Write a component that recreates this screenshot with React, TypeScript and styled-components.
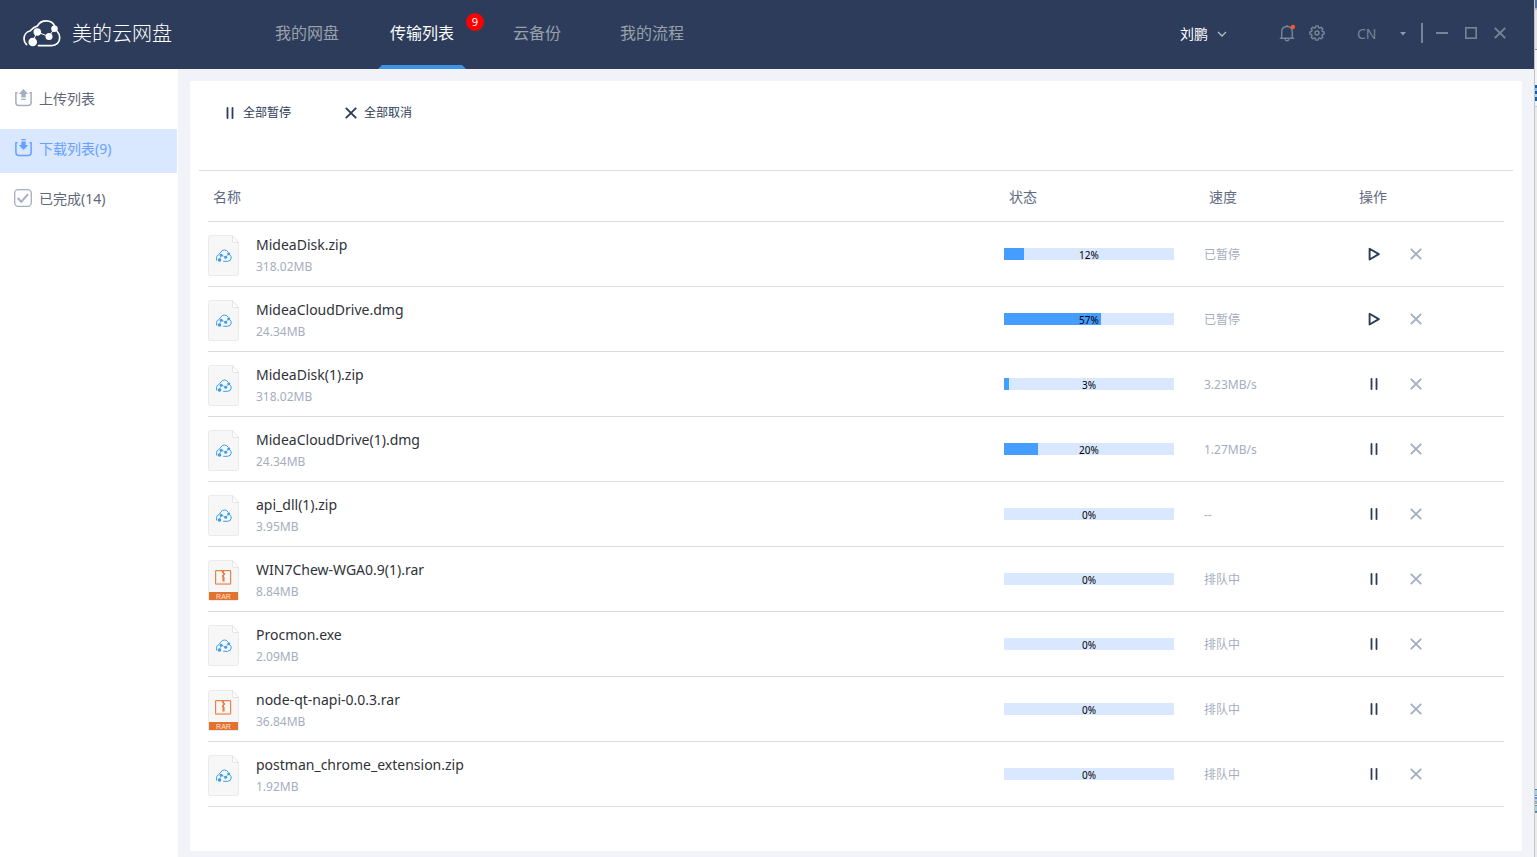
import React from "react";
import styled, { createGlobalStyle } from "styled-components";

const GlobalStyle = createGlobalStyle`
  * { box-sizing: border-box; }
  body {
    margin: 0;
    background: #f2f3f8;
    font-family: "Noto Sans", "Noto Sans CJK SC", sans-serif;
    font-size: 14px;
    line-height: 20px;
    color: #606a82;
  }
  button, select { font: inherit; color: inherit; }
  svg { display: block; flex: none; }
`;

const Screen = styled.div`
  display: flex;
  min-height: 100vh;
`;

const AppWindow = styled.div`
  flex: 1;
  min-width: 0;
  display: flex;
  flex-direction: column;
`;

const DesktopEdge = styled.div`
  width: 3px;
  flex: none;
  border-left: 1px solid #c4c5c8;
  background: linear-gradient(
    #56739b 0 8px, #b9b5b4 8px 10px, #e4e2e1 10px 49px, #8d8d8d 49px 50px, #f4f4f4 50px 85px,
    #0f5fae 85px 88px, #8dbbe6 88px 91px, #0f5fae 91px 94px, #b8d4ee 94px 97px, #0f5fae 97px 101px,
    #f4f4f4 101px 106px, #cccccc 106px 107px, #ebebeb 107px 789px,
    #2c8ab0 789px 790px, #a9d0de 790px 795px, #8a8a8a 795px 796px, #e8e8e8 796px 797px,
    #5b8fe0 797px 799px, #b6cdf2 799px 801px, #8fb3b3 801px 804px, #e8e8e8 804px 805px,
    #8a8a8a 805px 806px, #a9d0de 806px 811px, #2c8ab0 811px 812px, #8a8a8a 812px 813px, #ebebeb 813px
  );
`;

const Header = styled.header`
  display: flex;
  align-items: stretch;
  height: 69px;
  padding-left: 23px;
  background: #2c3c5a;
`;

const Brand = styled.div`
  display: flex;
  align-items: center;
  gap: 11px;
  width: 240px;
  flex: none;
  padding-bottom: 1px;
  color: #fff;
  font-size: 20px;
  font-weight: 300;
`;

const Nav = styled.nav`
  display: grid;
  grid-template-columns: 115px 123px 107px 88px;
  justify-items: start;
`;

const Tab = styled.a<{ $active?: boolean }>`
  position: relative;
  display: flex;
  align-items: center;
  padding: 0 12px 4px;
  font-size: 16px;
  text-decoration: none;
  white-space: nowrap;
  color: ${(p) => (p.$active ? "#fff" : "#98a0aa")};

  &::after {
    content: "";
    position: absolute;
    inset: auto 0 0;
    height: 4px;
    background: ${(p) => (p.$active ? "#3d93e4" : "transparent")};
    clip-path: polygon(4px 0, calc(100% - 4px) 0, 100% 100%, 0 100%);
  }
`;

const Badge = styled.span`
  position: absolute;
  left: 100%;
  top: 13px;
  width: 18px;
  height: 18px;
  border-radius: 9px;
  background: #fe0000;
  color: #fff;
  font-size: 11px;
  line-height: 18px;
  text-align: center;
`;

const HeaderTools = styled.div`
  display: flex;
  align-items: center;
  margin-left: auto;
  padding: 0 28px 3px 0;
  color: #77849a;
`;

const IconButton = styled.button`
  display: flex;
  align-items: center;
  justify-content: center;
  width: 20px;
  height: 20px;
  padding: 0;
  border: 0;
  background: none;
`;

const UserButton = styled.button`
  display: flex;
  align-items: center;
  gap: 9px;
  padding: 2px 0 0;
  margin-right: 50px;
  border: 0;
  background: none;
  color: #fff;
`;

const Notices = styled.div`
  display: flex;
  gap: 10px;
  margin-right: 30px;
`;

const LanguageField = styled.label`
  position: relative;
  display: flex;
  align-items: center;
  margin-right: 14px;
  padding-top: 2px;
  svg { position: absolute; right: 1px; pointer-events: none; }
`;

const LanguageSelect = styled.select`
  appearance: none;
  width: 50px;
  padding: 0;
  border: 0;
  background: none;
`;

const WindowControls = styled.div`
  display: flex;
  align-items: center;
  gap: 9px;
  padding-left: 9px;
  border-left: 2px solid #77849a;
  margin-right: -4px;
`;

const Body = styled.div`
  flex: 1;
  display: flex;
`;

const Sidebar = styled.aside`
  display: flex;
  flex-direction: column;
  gap: 6px;
  width: 178px;
  flex: none;
  padding: 10px 1px 0 0;
  background: #fff;
`;

const SideLink = styled.a<{ $active?: boolean }>`
  display: flex;
  align-items: flex-start;
  gap: 7px;
  height: 44px;
  padding: 10px 0 0 14px;
  text-decoration: none;
  color: ${(p) => (p.$active ? "#66a1ff" : "#606878")};
  background: ${(p) => (p.$active ? "#d9e7ff" : "transparent")};
  svg { color: ${(p) => (p.$active ? "#66a1ff" : "#a5adc0")}; }
`;

const Main = styled.main`
  flex: 1;
  min-width: 0;
  display: flex;
  padding: 12px 12px 6px;
`;

const Panel = styled.section`
  flex: 1;
  min-width: 0;
  padding: 0 9px;
  background: #fff;
`;

const Toolbar = styled.div`
  display: flex;
  align-items: flex-start;
  gap: 54px;
  height: 90px;
  padding: 21px 0 0 25px;
  border-bottom: 1px solid #dcdfe0;
`;

const ToolButton = styled.button`
  display: flex;
  align-items: center;
  gap: 7px;
  padding: 0;
  border: 0;
  background: none;
  color: #2c3c5a;
  font-size: 12px;
  line-height: 22px;
`;

const TableArea = styled.div`
  padding: 0 9px;
`;

const Table = styled.table`
  width: 100%;
  table-layout: fixed;
  border-collapse: separate;
  border-spacing: 0;
`;

const HeadCell = styled.th<{ $width?: number }>`
  width: ${(p) => (p.$width ? `${p.$width}px` : "auto")};
  height: 51px;
  padding: 2px 5px 0;
  border-bottom: 1px solid #dcdcdc;
  font-weight: 400;
  text-align: left;
`;

const Cell = styled.td`
  height: 65px;
  padding: 0;
  border-bottom: 1px solid #dcdcdc;
  color: #a5adc0;
  font-size: 12px;
`;

const FileCell = styled.div`
  display: flex;
  align-items: center;
  gap: 17px;
  padding-top: 2px;
`;

const FileText = styled.div`
  padding-top: 2px;
`;

const FileName = styled.div`
  color: #2f3238;
  font-size: 14px;
  line-height: 22px;
`;

const FileSize = styled.div`
  font-size: 12px;
  line-height: 22px;
`;

const Speed = styled.div`
  padding-top: 2px;
`;

const Track = styled.div`
  position: relative;
  width: 170px;
  height: 12px;
  background: #d9e7ff;
`;

const Fill = styled.div`
  height: 100%;
  background: #459dff;
`;

const Percent = styled.span`
  position: absolute;
  inset: 0;
  color: #000;
  font-size: 10px;
  line-height: 14px;
  text-align: center;
`;

const Actions = styled.div`
  display: flex;
  gap: 22px;
  padding-left: 10px;
`;

const Logo = () => (
  <svg width="38" height="28" viewBox="0 0 38 28" fill="none" stroke="#fff" aria-hidden="true">
    <path
      d="M3.500 24.500C1.800 23 1 21 1 18.800c0-4 2.600-7.100 6-7.800C9 8.700 12 6.600 14.500 5.900 16.300 2.700 19.500.9 23 .9c4.300 0 7.600 2.200 8.800 5.500M34.300 11.500c1.600 1.700 2.400 3.900 2.400 6.300 0 4.600-3.400 7.800-8 7.800H15.500"
      strokeWidth="1.700" strokeLinecap="round"
    />
    <path d="M9.500 22l4.700-10 11.500 4.500 6-8" strokeWidth="1" />
    <g fill="#fff" stroke="none">
      <circle cx="9.700" cy="22" r="4.300" />
      <circle cx="14.300" cy="12" r="3.800" />
      <circle cx="26" cy="16.500" r="3.500" />
      <circle cx="31.500" cy="8.700" r="3.300" />
    </g>
  </svg>
);

const PauseIcon = () => (
  <svg width="12" height="12" viewBox="0 0 12 12" stroke="#2c3c5a" strokeWidth="1.800" strokeLinecap="round" aria-hidden="true">
    <path d="M3.500 1v10M8.500 1v10" />
  </svg>
);

const PlayIcon = () => (
  <svg width="12" height="14" viewBox="0 0 12 14" fill="none" stroke="#2c3c5a" strokeWidth="1.900" strokeLinejoin="round" aria-hidden="true">
    <path d="M1.600 1.700v10.800L10.800 7.100z" />
  </svg>
);

const CrossIcon = ({ color }: { color: string }) => (
  <svg width="12" height="12" viewBox="0 0 12 12" stroke={color} strokeWidth="1.900" aria-hidden="true">
    <path d="M.8.8l10.400 10.400M11.200.8L.8 11.200" />
  </svg>
);

const TrayPath = () => (
  <path d="M3.500 3.800H1.900v9.700q0 3 3 3h9.200q3 0 3-3V3.800H15.500" fill="none" stroke="currentColor" strokeWidth="1.500" />
);

const UploadIcon = () => (
  <svg width="18" height="18" viewBox="0 0 18 18" aria-hidden="true">
    <TrayPath />
    <path d="M9.500 0l4.700 5h-2.500V8.500H7.300V5H4.800zM7.300 9.700h4.400v1.200H7.300z" fill="currentColor" />
  </svg>
);

const DownloadIcon = () => (
  <svg width="18" height="18" viewBox="0 0 18 18" aria-hidden="true">
    <TrayPath />
    <path d="M7.300 0h4.400v1.200H7.300zM7.300 2.400h4.400v3.600h2.500L9.500 11 4.800 6h2.500z" fill="currentColor" />
  </svg>
);

const DoneIcon = () => (
  <svg width="18" height="18" viewBox="0 0 18 18" fill="none" stroke="currentColor" aria-hidden="true">
    <rect x=".7" y=".7" width="16.600" height="16.600" rx="3.500" strokeWidth="1.300" />
    <path d="M3.600 9l3.700 3.800L14 5.200" strokeWidth="2" />
  </svg>
);

const BellIcon = () => (
  <svg width="18" height="18" viewBox="0 0 18 18" fill="none" stroke="currentColor" strokeWidth="1.400" aria-hidden="true">
    <path d="M1.800 14.300h14.400M3.700 14V8c0-3.300 2-5.500 5.300-5.500s5.300 2.200 5.300 5.500v6M9 2.500V1M7 15.300c.3 1 1 1.400 2 1.400s1.700-.4 2-1.400" />
    <circle cx="14.900" cy="3" r="2.200" fill="#ff5226" stroke="none" />
  </svg>
);

// Outline of an eight-toothed cog centred on (8, 8).
const cogPoints = Array.from({ length: 32 }, (_, i) => {
  const tooth = i % 4 < 2;
  const angle = ((Math.floor(i / 4) * 45 + [-9, 9, 16, 29][i % 4]) * Math.PI) / 180;
  const radius = tooth ? 7.2 : 5.6;
  return `${(8 + radius * Math.sin(angle)).toFixed(2)},${(8 - radius * Math.cos(angle)).toFixed(2)}`;
}).join(" ");

const GearIcon = () => (
  <svg width="16" height="16" viewBox="0 0 16 16" fill="none" stroke="currentColor" strokeWidth="1.400" strokeLinejoin="round" aria-hidden="true">
    <polygon points={cogPoints} />
    <circle cx="8" cy="8" r="2" />
  </svg>
);

const Sheet = () => (
  <>
    <path d="M2.500.5H24l6.500 7v31.500q0 1.500-1.500 1.500H2q-1.500 0-1.500-1.500V2.500q0-2 2-2z" fill="#f7f7f7" stroke="#ebebeb" />
    <path d="M24.500.5v5.500q0 1.500 1.500 1.500h4.500z" fill="#fff" stroke="#dedede" strokeWidth=".8" />
  </>
);

const CloudFileIcon = () => (
  <svg width="31" height="41" viewBox="0 0 31 41" aria-hidden="true">
    <Sheet />
    <g fill="none" stroke="#3a9ee8" strokeWidth="1">
      <path d="M8.600 25.500v-3.300q.2-2 2.200-2.500l2.200-2.800q1.200-1.900 3.500-1.900t3.500 2M22 20q1.300 1.200 1.200 3-.2 3-3.500 3.300h-4.500" />
      <path d="M11.500 25l1.500-5 4.500 2 3.500-3" strokeWidth=".6" />
    </g>
    <g fill="#3a9ee8">
      <circle cx="11.500" cy="25" r="1.800" />
      <circle cx="13.200" cy="20.300" r="1.500" />
      <circle cx="17.700" cy="22.300" r="1.500" />
      <circle cx="20.700" cy="18.700" r="1.500" />
    </g>
  </svg>
);

const RarFileIcon = () => (
  <svg width="31" height="41" viewBox="0 0 31 41" aria-hidden="true">
    <Sheet />
    <rect x="7.600" y="10.600" width="15" height="13.500" rx=".6" fill="none" stroke="#e6824a" strokeWidth="1.200" />
    <path d="M8 23.800h14.500" stroke="#efb796" strokeWidth="1.800" />
    <path d="M15 11v2M16 13v2M15 15v2M15.500 17v4.500" stroke="#e6824a" strokeWidth="2.200" />
    <rect x="1" y="32" width="29" height="8" fill="#e2722e" />
    <text x="15.500" y="38.500" textAnchor="middle" fontSize="7" fontFamily="Liberation Sans, sans-serif" fill="#fbe4d6">RAR</text>
  </svg>
);

type Transfer = { name: string; size: string; percent: number; speed: string; paused?: boolean };

const transfers: Transfer[] = [
  { name: "MideaDisk.zip", size: "318.02MB", percent: 12, speed: "已暂停", paused: true },
  { name: "MideaCloudDrive.dmg", size: "24.34MB", percent: 57, speed: "已暂停", paused: true },
  { name: "MideaDisk(1).zip", size: "318.02MB", percent: 3, speed: "3.23MB/s" },
  { name: "MideaCloudDrive(1).dmg", size: "24.34MB", percent: 20, speed: "1.27MB/s" },
  { name: "api_dll(1).zip", size: "3.95MB", percent: 0, speed: "--" },
  { name: "WIN7Chew-WGA0.9(1).rar", size: "8.84MB", percent: 0, speed: "排队中" },
  { name: "Procmon.exe", size: "2.09MB", percent: 0, speed: "排队中" },
  { name: "node-qt-napi-0.0.3.rar", size: "36.84MB", percent: 0, speed: "排队中" },
  { name: "postman_chrome_extension.zip", size: "1.92MB", percent: 0, speed: "排队中" },
];

const TransferRow = ({ item }: { item: Transfer }) => (
  <tr>
    <Cell>
      <FileCell>
        {item.name.endsWith(".rar") ? <RarFileIcon /> : <CloudFileIcon />}
        <FileText>
          <FileName>{item.name}</FileName>
          <FileSize>{item.size}</FileSize>
        </FileText>
      </FileCell>
    </Cell>
    <Cell>
      <Track role="progressbar" aria-label={item.name} aria-valuenow={item.percent} aria-valuemin={0} aria-valuemax={100}>
        <Fill style={{ width: `${item.percent}%` }} />
        <Percent>{item.percent}%</Percent>
      </Track>
    </Cell>
    <Cell><Speed>{item.speed}</Speed></Cell>
    <Cell>
      <Actions>
        <IconButton type="button" aria-label={item.paused ? "继续" : "暂停"}>
          {item.paused ? <PlayIcon /> : <PauseIcon />}
        </IconButton>
        <IconButton type="button" aria-label="取消">
          <CrossIcon color="#a5adc0" />
        </IconButton>
      </Actions>
    </Cell>
  </tr>
);

export default function App() {
  return (
    <Screen>
      <GlobalStyle />
      <AppWindow>
        <Header>
          <Brand><Logo />美的云网盘</Brand>
          <Nav>
            <Tab href="#disk">我的网盘</Tab>
            <Tab href="#transfers" $active>传输列表<Badge>9</Badge></Tab>
            <Tab href="#backup">云备份</Tab>
            <Tab href="#flows">我的流程</Tab>
          </Nav>
          <HeaderTools>
            <UserButton type="button">
              刘鹏
              <svg width="10" height="6" viewBox="0 0 10 6" fill="none" stroke="#b4bcc8" strokeWidth="1.300" aria-hidden="true">
                <path d="M1 1l4 4 4-4" />
              </svg>
            </UserButton>
            <Notices>
              <IconButton type="button" aria-label="通知"><BellIcon /></IconButton>
              <IconButton type="button" aria-label="设置"><GearIcon /></IconButton>
            </Notices>
            <LanguageField>
              <LanguageSelect aria-label="语言" defaultValue="CN">
                <option>CN</option>
                <option>EN</option>
              </LanguageSelect>
              <svg width="6" height="4" viewBox="0 0 6 4" aria-hidden="true"><path d="M0 0h6L3 3.500z" fill="#8d99ab" /></svg>
            </LanguageField>
            <WindowControls>
              <IconButton type="button" aria-label="最小化">
                <svg width="12" height="12" viewBox="0 0 12 12" aria-hidden="true"><path d="M0 6h12" stroke="currentColor" strokeWidth="2" /></svg>
              </IconButton>
              <IconButton type="button" aria-label="最大化">
                <svg width="12" height="12" viewBox="0 0 12 12" aria-hidden="true"><rect x=".8" y=".8" width="10.400" height="10.400" fill="none" stroke="currentColor" strokeWidth="1.600" /></svg>
              </IconButton>
              <IconButton type="button" aria-label="关闭"><CrossIcon color="#77849a" /></IconButton>
            </WindowControls>
          </HeaderTools>
        </Header>
        <Body>
          <Sidebar>
            <SideLink href="#upload"><UploadIcon />上传列表</SideLink>
            <SideLink href="#download" $active><DownloadIcon />下载列表(9)</SideLink>
            <SideLink href="#done"><DoneIcon />已完成(14)</SideLink>
          </Sidebar>
          <Main>
            <Panel>
              <Toolbar>
                <ToolButton type="button"><PauseIcon />全部暂停</ToolButton>
                <ToolButton type="button"><CrossIcon color="#2c3c5a" />全部取消</ToolButton>
              </Toolbar>
              <TableArea>
                <Table>
                  <thead>
                    <tr>
                      <HeadCell>名称</HeadCell>
                      <HeadCell $width={200}>状态</HeadCell>
                      <HeadCell $width={150}>速度</HeadCell>
                      <HeadCell $width={150}>操作</HeadCell>
                    </tr>
                  </thead>
                  <tbody>
                    {transfers.map((item) => <TransferRow key={item.name} item={item} />)}
                  </tbody>
                </Table>
              </TableArea>
            </Panel>
          </Main>
        </Body>
      </AppWindow>
      <DesktopEdge />
    </Screen>
  );
}
